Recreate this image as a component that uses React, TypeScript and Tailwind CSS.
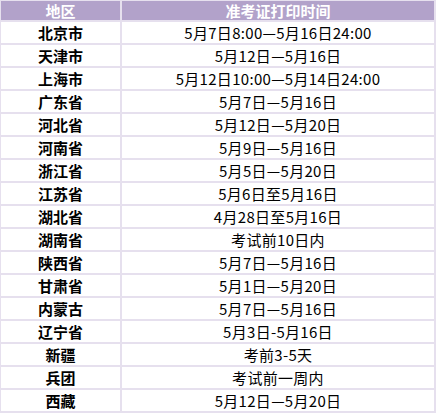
import React from "react";

const rows: [string, string][] = [
  ["北京市", "5月7日8:00—5月16日24:00"],
  ["天津市", "5月12日—5月16日"],
  ["上海市", "5月12日10:00—5月14日24:00"],
  ["广东省", "5月7日—5月16日"],
  ["河北省", "5月12日—5月20日"],
  ["河南省", "5月9日—5月16日"],
  ["浙江省", "5月5日—5月20日"],
  ["江苏省", "5月6日至5月16日"],
  ["湖北省", "4月28日至5月16日"],
  ["湖南省", "考试前10日内"],
  ["陕西省", "5月7日—5月16日"],
  ["甘肃省", "5月1日—5月20日"],
  ["内蒙古", "5月7日—5月16日"],
  ["辽宁省", "5月3日-5月16日"],
  ["新疆", "考前3-5天"],
  ["兵团", "考试前一周内"],
  ["西藏", "5月12日—5月20日"],
];

export default function App() {
  return (
    <div
      className="w-[436px] h-[413px] bg-white"
      style={{ fontFamily: '"Noto Sans CJK SC", "Noto Sans", sans-serif' }}
    >
      <div className="grid grid-cols-[119px_312px] gap-[2px] bg-[#e6e0ee] pl-[1px] pr-[2px] pt-[1px] pb-[2px] w-[436px] h-[413px] grid-rows-[19px_repeat(17,21px)]">
        <div className="bg-[#b2a2ca] text-white font-bold text-[15px] leading-none flex items-center justify-center">
          地区
        </div>
        <div className="bg-[#b2a2ca] text-white font-bold text-[15px] leading-none flex items-center justify-center">
          准考证打印时间
        </div>
        {rows.map(([a, b]) => (
          <React.Fragment key={a}>
            <div className="bg-white text-black font-bold text-[15px] leading-none flex items-center justify-center">
              {a}
            </div>
            <div className="bg-white text-black text-[15px] tracking-[0.3px] leading-none flex items-center justify-center">
              {b}
            </div>
          </React.Fragment>
        ))}
      </div>
    </div>
  );
}
